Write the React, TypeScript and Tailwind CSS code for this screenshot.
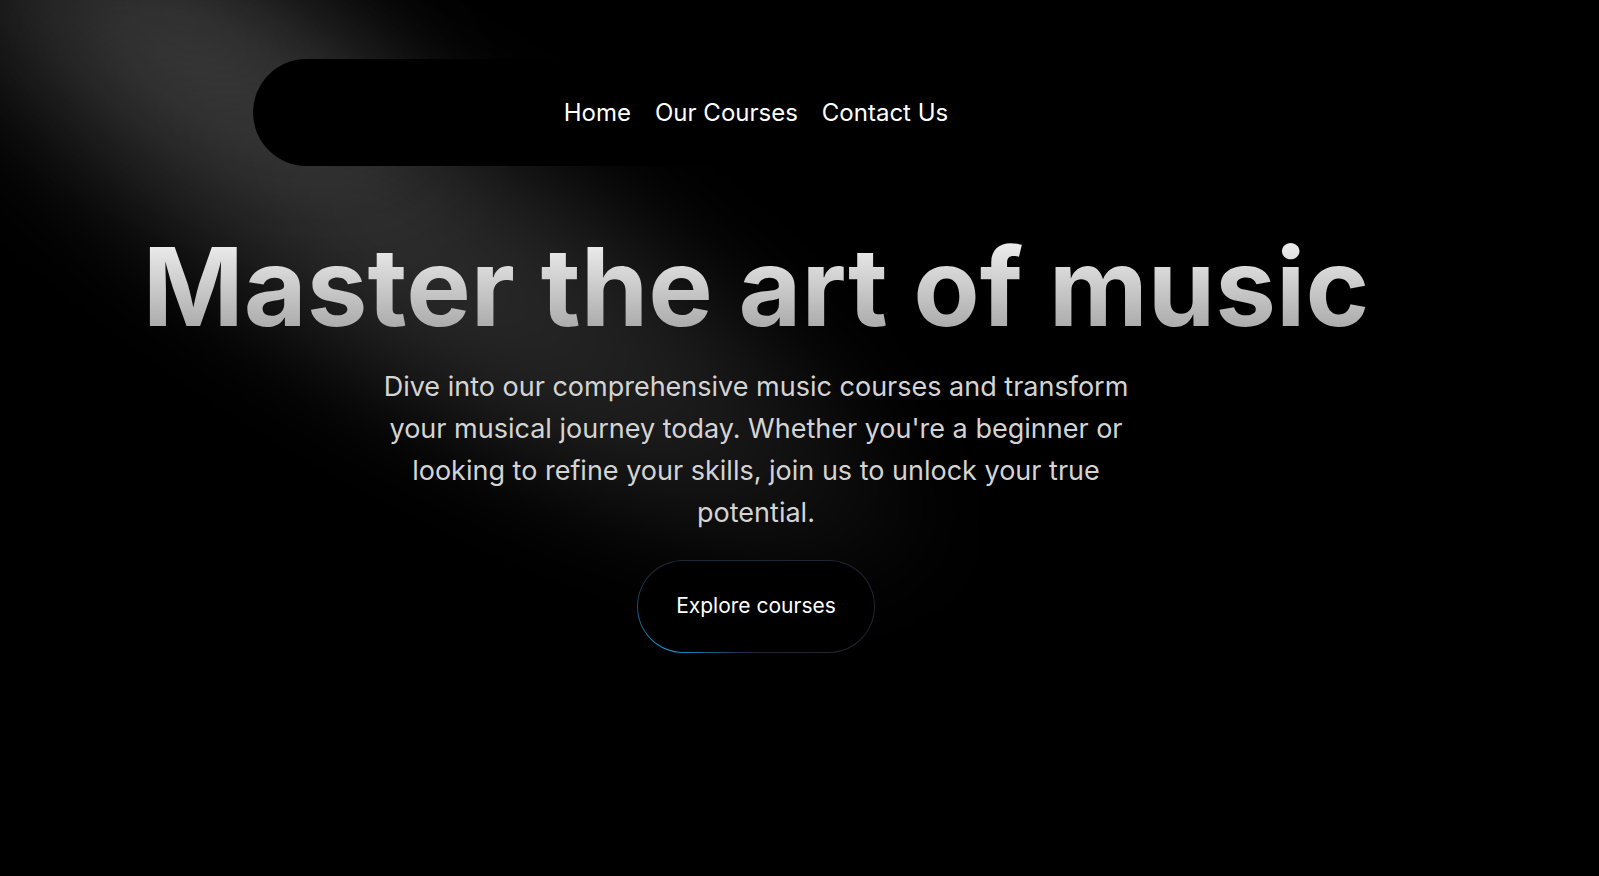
const links = ['Home', 'Our Courses', 'Contact Us'];

function Spotlight() {
  return (
    <div className="pointer-events-none absolute inset-0 overflow-hidden">
      <div className="absolute left-[-250px] top-[50px] h-[380px] w-[1300px] rotate-[31deg] rounded-full bg-[radial-gradient(ellipse_at_center,rgba(255,255,255,0.19)_0%,rgba(255,255,255,0.1)_40%,transparent_70%)] blur-2xl" />
      <div className="absolute left-[-160px] top-[-140px] h-[320px] w-[680px] rotate-[30deg] rounded-full bg-[radial-gradient(ellipse_at_center,rgba(255,255,255,0.15)_0%,rgba(255,255,255,0.06)_45%,transparent_70%)] blur-2xl" />
    </div>
  );
}

export default function App() {
  return (
    <div className="relative min-h-screen overflow-hidden bg-black font-['Inter',sans-serif] text-white">
      <Spotlight />
      <div className="relative flex w-full max-w-[1512px] flex-col items-center pt-[59px] pb-20">
        <nav className="flex h-[107px] w-[1006px] items-center justify-center gap-6 rounded-full bg-black">
          {links.map((l) => (
            <a key={l} href="#" className="text-2xl text-white">{l}</a>
          ))}
        </nav>

        <h1 className="mt-[67px] bg-gradient-to-b from-neutral-100 to-neutral-400 bg-clip-text text-[108.5px] leading-none font-bold text-transparent">
          Master the art of music
        </h1>

        <p className="mt-6 max-w-[780px] text-center text-[27px] leading-[42px] text-neutral-300">
          Dive into our comprehensive music courses and transform your musical journey today. Whether you're a beginner or looking to refine your skills, join us to unlock your true potential.
        </p>

        <span className="mt-[26px] rounded-full bg-[radial-gradient(circle_at_12%_100%,#0ea5e9_0%,#1e293b_35%,#1f2430_100%)] p-px">
          <button className="flex h-[91px] items-center rounded-full bg-black px-[38px] text-[21px] text-white">
            Explore courses
          </button>
        </span>
      </div>
    </div>
  );
}
